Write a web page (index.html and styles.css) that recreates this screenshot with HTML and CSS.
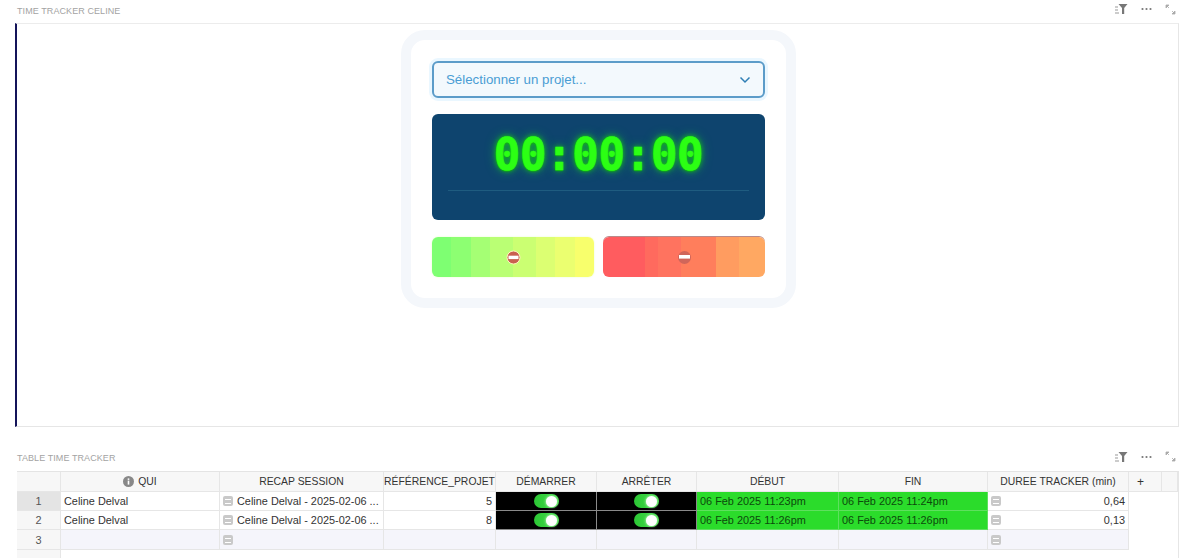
FILE: index.html
```html
<!DOCTYPE html>
<html lang="en">
<head>
    <meta charset="UTF-8" />
    <meta name="viewport" content="width=device-width, initial-scale=1.0" />
    <title>Time Tracker</title>
    <link rel="stylesheet" href="styles.css">
</head>
<body>

    <!-- Tracker widget -->
    <section class="widget">
        <div class="widget-head">
            <span class="widget-title">Time Tracker Celine</span>
            <div class="widget-tools">
                <svg width="13" height="10" viewBox="0 0 13 10"><path d="M0 3h3M0 6h3M0 9h4" stroke="#999" fill="none"/><path d="M3.5 0h9L9.2 4v6H7V4z" fill="#777"/></svg>
                <svg width="11" height="4" viewBox="0 0 11 4"><circle cx="1.5" cy="2" r="1.1" fill="#777"/><circle cx="5.5" cy="2" r="1.1" fill="#777"/><circle cx="9.5" cy="2" r="1.1" fill="#777"/></svg>
                <svg width="11" height="11" viewBox="0 0 11 11"><path d="M4 1H1v3l3-3zM1 1l3 3M7 10h3V7zM10 10L7 7" stroke="#aaa" stroke-width=".8" fill="#aaa"/></svg>
            </div>
        </div>
        <div class="tracker-panel">
            <div class="tracker-card">
                <div class="project-select">
                    <span>Sélectionner un projet...</span>
                    <svg width="12" height="8" viewBox="0 0 12 8"><path d="M1.5 1.5L6 6l4.5-4.5" stroke="#2f7fb5" stroke-width="1.5" fill="none"/></svg>
                </div>
                <div class="timer">
                    <div class="timer-digits">00:00:00</div>
                    <div class="timer-line"></div>
                </div>
                <div class="tracker-buttons">
                    <button class="track-btn start">
                        <svg width="15" height="15" viewBox="0 0 15 15"><circle cx="7.5" cy="7.5" r="6.5" fill="#c9614f" stroke="#fff3c0"/><rect x="2.5" y="5.7" width="10" height="3.4" fill="#fff"/></svg>
                    </button>
                    <button class="track-btn stop">
                        <svg width="15" height="15" viewBox="0 0 15 15"><circle cx="7.5" cy="7.5" r="6.5" fill="#d0665a"/><rect x="2" y="5" width="11" height="3.6" fill="#fff"/></svg>
                    </button>
                </div>
            </div>
        </div>
    </section>

    <!-- Sessions table -->
    <section class="widget table-widget">
        <div class="widget-head">
            <span class="widget-title">Table Time Tracker</span>
            <div class="widget-tools">
                <svg width="13" height="10" viewBox="0 0 13 10"><path d="M0 3h3M0 6h3M0 9h4" stroke="#999" fill="none"/><path d="M3.5 0h9L9.2 4v6H7V4z" fill="#777"/></svg>
                <svg width="11" height="4" viewBox="0 0 11 4"><circle cx="1.5" cy="2" r="1.1" fill="#777"/><circle cx="5.5" cy="2" r="1.1" fill="#777"/><circle cx="9.5" cy="2" r="1.1" fill="#777"/></svg>
                <svg width="11" height="11" viewBox="0 0 11 11"><path d="M4 1H1v3l3-3zM1 1l3 3M7 10h3V7zM10 10L7 7" stroke="#aaa" stroke-width=".8" fill="#aaa"/></svg>
            </div>
        </div>
        <div class="grid">
            <div class="row row-head">
                <div class="cell"></div>
                <div class="cell center">
                    <svg class="info" width="11" height="11" viewBox="0 0 11 11"><circle cx="5.5" cy="5.5" r="5.5" fill="#888"/><rect x="4.7" y="4.6" width="1.6" height="4" fill="#fff"/><rect x="4.7" y="2.4" width="1.6" height="1.5" fill="#fff"/></svg>
                    QUI
                </div>
                <div class="cell center">RECAP SESSION</div>
                <div class="cell center">RÉFÉRENCE_PROJET</div>
                <div class="cell center">DÉMARRER</div>
                <div class="cell center">ARRÊTER</div>
                <div class="cell center">DÉBUT</div>
                <div class="cell center">FIN</div>
                <div class="cell center">DUREE TRACKER (min)</div>
                <div class="cell add">+</div>
                <div class="cell"></div>
            </div>

            <div class="row">
                <div class="cell num selected">1</div>
                <div class="cell">Celine Delval</div>
                <div class="cell"><i class="fx"></i><span class="clip">Celine Delval - 2025-02-06 ...</span></div>
                <div class="cell right">5</div>
                <div class="cell dark"><i class="toggle"></i></div>
                <div class="cell dark"><i class="toggle"></i></div>
                <div class="cell green">06 Feb 2025 11:23pm</div>
                <div class="cell green">06 Feb 2025 11:24pm</div>
                <div class="cell"><i class="fx"></i><span class="push">0,64</span></div>
            </div>

            <div class="row">
                <div class="cell num">2</div>
                <div class="cell">Celine Delval</div>
                <div class="cell"><i class="fx"></i><span class="clip">Celine Delval - 2025-02-06 ...</span></div>
                <div class="cell right">8</div>
                <div class="cell dark"><i class="toggle"></i></div>
                <div class="cell dark"><i class="toggle"></i></div>
                <div class="cell green">06 Feb 2025 11:26pm</div>
                <div class="cell green">06 Feb 2025 11:26pm</div>
                <div class="cell"><i class="fx"></i><span class="push">0,13</span></div>
            </div>

            <div class="row row-new">
                <div class="cell num">3</div>
                <div class="cell"></div>
                <div class="cell"><i class="fx"></i></div>
                <div class="cell"></div>
                <div class="cell"></div>
                <div class="cell"></div>
                <div class="cell"></div>
                <div class="cell"></div>
                <div class="cell"><i class="fx"></i></div>
            </div>

            <div class="row row-add">
                <div class="cell num"></div>
            </div>
        </div>
    </section>

</body>
</html>
```

FILE: styles.css
```css
* {
    margin: 0;
    padding: 0;
    box-sizing: border-box;
}
body {
    height: 558px;
    overflow: hidden;
    padding: 0 17px 0 15px;
    background: #fff;
    font-family: "Liberation Sans", Arial, sans-serif;
    color: #333;
}
.widget-head {
    display: flex;
    justify-content: space-between;
    align-items: center;
    height: 23px;
    padding-left: 2px;
}
.widget-title {
    padding-bottom: 2px;
    font-size: 9px;
    letter-spacing: 0.08px;
    text-transform: uppercase;
    color: #a3a3a3;
}
.widget-tools {
    display: flex;
    align-items: center;
    gap: 13px;
    padding: 0 3px 5px 0;
}

/* tracker */
.tracker-panel {
    height: 404px;
    padding: 6px 0 0 2px;
    border: 1px solid #e6e6e6;
    border-left: 2px solid #14145a;
    border-top-color: #ececec;
}
.tracker-card {
    width: 395px;
    height: 278px;
    margin: 0 auto;
    padding: 21px;
    background: #fff;
    border: 10px solid #f4f7fb;
    border-radius: 24px;
}
.project-select {
    display: flex;
    justify-content: space-between;
    align-items: center;
    height: 37px;
    padding: 0 12px;
    font-size: 13.3px;
    color: #4a9dd4;
    background: #f3f9fd;
    border: 2px solid #5c9cc9;
    border-radius: 6px;
    box-shadow: 0 0 0 3px #eaf7ff;
}
.timer {
    height: 106px;
    margin-top: 16px;
    padding: 16px 16px 0;
    background: #0e446e;
    border-radius: 6px;
}
.timer-digits {
    font-family: "DejaVu Sans Mono", monospace;
    font-size: 44px;
    font-weight: bold;
    letter-spacing: -0.3px;
    line-height: 50px;
    text-align: center;
    color: #2cff14;
    -webkit-text-stroke: 0.7px #2cff14;
    text-shadow: 0 1px 1px #0fa80f, 0 0 5px #14d000, 0 0 11px rgba(30, 220, 60, 0.6);
}
.timer-line {
    height: 1px;
    margin-top: 10px;
    background: #1f5c80;
}
.tracker-buttons {
    display: flex;
    gap: 9px;
    margin-top: 17px;
}
.track-btn {
    flex: 1;
    display: flex;
    justify-content: center;
    align-items: center;
    height: 40px;
    border: none;
    border-radius: 6px;
}
.track-btn.start {
    background: linear-gradient(90deg, #7eff72 0 12%, #8dff72 12% 24%, #a5ff74 24% 36%, #baff74 36% 50%, #cbff72 50% 64%, #dcff72 64% 76%, #ebff70 76% 88%, #f8ff6c 88%);
    box-shadow: 0 0 2px #e9ffc0;
}
.track-btn.stop {
    background: linear-gradient(90deg, #ff5c5f 0 26%, #ff6a5e 26% 34%, #ff735f 34% 48%, #ff7e5c 48% 70%, #ff9c60 70% 84%, #ffa862 84%);
    box-shadow: 0 -1px 0 #b98a8a;
}

/* table */
.table-widget {
    margin-top: 20px;
    padding-left: 2px;
}
.table-widget .widget-head {
    height: 24px;
    padding-left: 0;
}
.grid {
    height: 87px;
    border-top: 1px solid #e4e4e4;
    border-right: 1px solid #e6e6e6;
    font-size: 10.9px;
}
.row {
    display: grid;
    grid-template-columns: 44px 159px 164px 112px 101px 100px 142px 149px 141px 33px 16px;
    height: 19px;
    color: #333;
}
.row-head {
    height: 20px;
    font-size: 10.4px;
}
.row-new {
    height: 20px;
}
.row-add {
    height: 9px;
}
.cell {
    display: flex;
    align-items: center;
    padding: 0 3px;
    white-space: nowrap;
    overflow: hidden;
    background: #fff;
    border-right: 1px solid #e6e6e6;
    border-bottom: 1px solid #e6e6e6;
}
.row-head .cell {
    background: #f7f7f7;
}
.row-new .cell {
    background: #f5f5fb;
}
.center {
    justify-content: center;
}
.right {
    justify-content: flex-end;
}
.num, .row-new .num {
    justify-content: center;
    color: #555;
    background: #f7f7f7;
}
.num.selected {
    background: #e4e4e4;
}
.add {
    padding-left: 8px;
    font-size: 12px;
}
.info {
    margin-right: 4px;
}
.fx {
    position: relative;
    flex: none;
    width: 10px;
    height: 10px;
    margin-right: 4px;
    background: #c9c9c9;
    border-radius: 2px;
}
.fx::after {
    content: "";
    position: absolute;
    left: 2px;
    right: 2px;
    top: 3px;
    height: 3px;
    border-top: 1px solid #fff;
    border-bottom: 1px solid #fff;
}
.push {
    margin-left: auto;
}
.dark {
    justify-content: center;
    background: #000;
    border-color: #8a8a8a;
}
.green {
    background: #2bdc2b;
    color: #0b4a0b;
    border-color: #5ee05e;
}
.toggle {
    position: relative;
    width: 25px;
    height: 14px;
    background: linear-gradient(90deg, #2cc735, #44dd4a);
    border-radius: 7px;
}
.toggle::after {
    content: "";
    position: absolute;
    right: 2px;
    top: 1.5px;
    width: 11px;
    height: 11px;
    background: #fff;
    border-radius: 50%;
    box-shadow: 0 0 3px #e4ffe4;
}
```
